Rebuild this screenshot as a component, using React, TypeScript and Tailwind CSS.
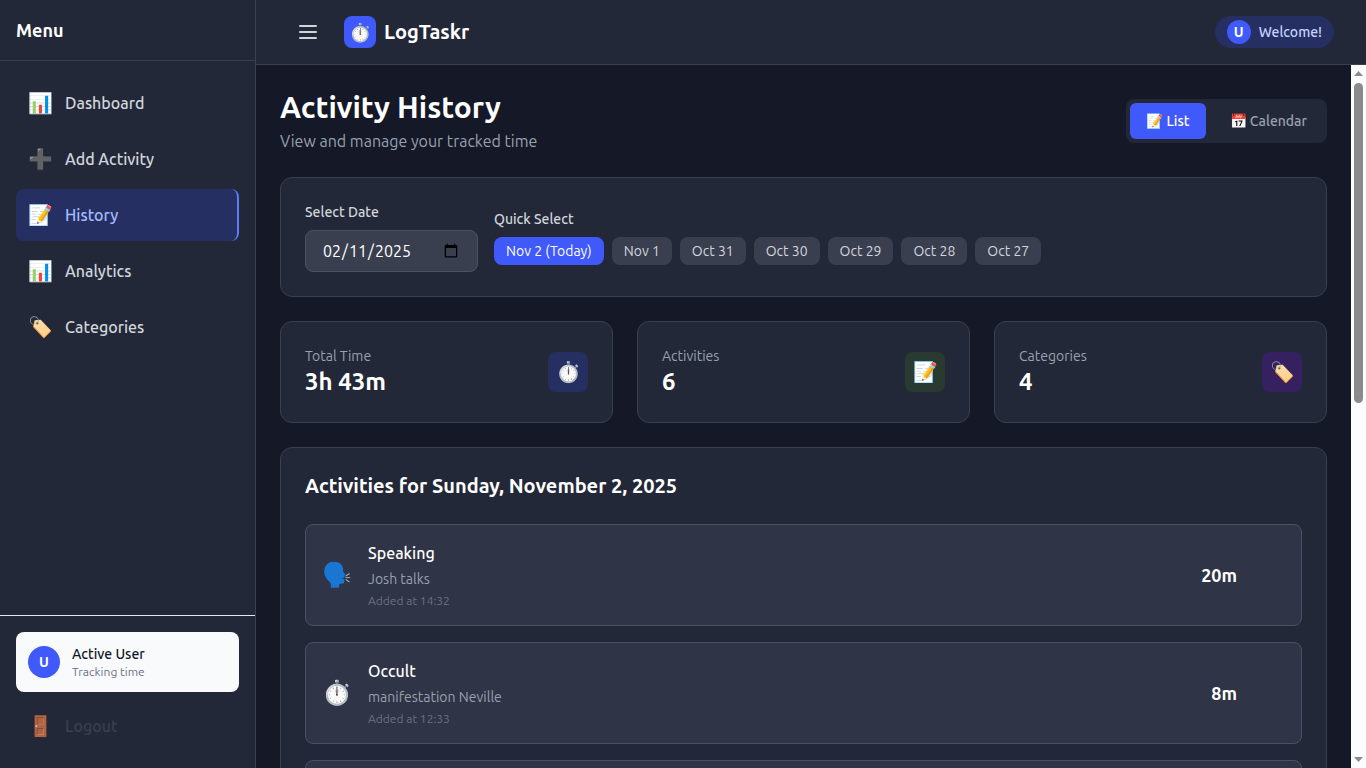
import React, { useState } from "react";

interface INavItem {
  icon: string;
  label: string;
}

interface IStat {
  label: string;
  value: string;
  icon: string;
  iconClass: string;
}

interface IActivity {
  icon: string;
  category: string;
  note: string;
  time: string;
  duration: string;
}

const navItems: INavItem[] = [
  { icon: "📊", label: "Dashboard" },
  { icon: "➕", label: "Add Activity" },
  { icon: "📝", label: "History" },
  { icon: "📊", label: "Analytics" },
  { icon: "🏷️", label: "Categories" }
];

const quickDates = [
  "Nov 2 (Today)",
  "Nov 1",
  "Oct 31",
  "Oct 30",
  "Oct 29",
  "Oct 28",
  "Oct 27"
];

const stats: IStat[] = [
  { label: "Total Time", value: "3h 43m", icon: "⏱️", iconClass: "bg-[#262f62]" },
  { label: "Activities", value: "6", icon: "📝", iconClass: "bg-[#293b31]" },
  { label: "Categories", value: "4", icon: "🏷️", iconClass: "bg-[#37205f]" }
];

const activities: IActivity[] = [
  { icon: "🗣️", category: "Speaking", note: "Josh talks", time: "14:32", duration: "20m" },
  { icon: "⏱️", category: "Occult", note: "manifestation Neville", time: "12:33", duration: "8m" },
  { icon: "💻", category: "Coding", note: "Side project", time: "11:10", duration: "45m" }
];

const Sidebar: React.FC = () => {
  const [active, setActive] = useState("History");

  return (
    <aside className="flex w-64 shrink-0 flex-col border-r border-[#3a3f50] bg-[#232838]">
      <div className="border-b border-[#3a3f50] p-4">
        <h2 className="text-lg font-bold text-white">Menu</h2>
      </div>
      <nav className="flex flex-1 flex-col gap-1 p-4">
        {navItems.map(item => (
          <a
            key={item.label}
            href="#"
            onClick={() => setActive(item.label)}
            className={
              "flex items-center gap-3 rounded-lg p-3 font-medium " +
              (item.label === active
                ? "border-r-2 border-[#5b7cff] bg-[#262f62] text-[#a3bbff]"
                : "text-gray-300")
            }
          >
            <span className="text-xl">{item.icon}</span>
            <span>{item.label}</span>
          </a>
        ))}
      </nav>
      <div className="border-t border-gray-200 p-4">
        <div className="flex items-center gap-3 rounded-lg bg-gray-50 p-3">
          <div className="flex h-8 w-8 items-center justify-center rounded-full bg-[#4059fb] text-sm font-bold text-white">
            U
          </div>
          <div>
            <p className="text-sm font-medium text-gray-900">Active User</p>
            <p className="text-xs text-gray-500">Tracking time</p>
          </div>
        </div>
        <button
          type="button"
          className="mt-2 flex w-full items-center gap-3 rounded-lg p-3 font-medium text-[#3a3f50]"
        >
          <span className="text-xl">🚪</span>
          <span>Logout</span>
        </button>
      </div>
    </aside>
  );
};

const TopBar: React.FC = () => (
  <header className="flex shrink-0 items-center justify-between border-b border-[#3a3f50] bg-[#232838] px-8">
    <div className="flex h-16 items-center gap-4">
      <button type="button" aria-label="Toggle menu" className="p-2 text-gray-300">
        <svg className="h-6 w-6" fill="none" stroke="currentColor" viewBox="0 0 24 24">
          <path strokeLinecap="round" strokeWidth={2} d="M4 6h16M4 12h16M4 18h16" />
        </svg>
      </button>
      <div className="flex items-center gap-2">
        <div className="flex h-8 w-8 items-center justify-center rounded-lg bg-[#4059fb] text-lg">
          ⏱️
        </div>
        <h1 className="text-xl font-bold text-white">LogTaskr</h1>
      </div>
    </div>
    <div className="flex items-center gap-2 rounded-full bg-[#262f62] px-3 py-1">
      <div className="flex h-6 w-6 items-center justify-center rounded-full bg-[#4059fb] text-sm font-bold text-white">
        U
      </div>
      <span className="text-sm font-medium text-[#c5d4ff]">Welcome!</span>
    </div>
  </header>
);

const ViewToggle: React.FC = () => {
  const [view, setView] = useState("List");
  const views = [
    { icon: "📝", name: "List" },
    { icon: "📅", name: "Calendar" }
  ];

  return (
    <div className="flex gap-2 rounded-lg bg-[#232838] p-1">
      {views.map(({ icon, name }) => (
        <button
          key={name}
          type="button"
          onClick={() => setView(name)}
          className={
            "rounded-md px-4 py-2 text-sm font-medium " +
            (view === name ? "bg-[#4059fb] text-white" : "text-gray-400")
          }
        >
          {icon} {name}
        </button>
      ))}
    </div>
  );
};

const DateFilter: React.FC = () => {
  const [selected, setSelected] = useState(quickDates[0]);
  const [date, setDate] = useState("2025-02-11");

  return (
    <section className="flex flex-wrap items-center gap-4 rounded-xl border border-[#3a3f50] bg-[#232838] p-6">
      <div>
        <label htmlFor="date" className="mb-2 block text-sm font-medium text-gray-300">
          Select Date
        </label>
        <input
          id="date"
          type="date"
          value={date}
          onChange={e => setDate(e.target.value)}
          className="block rounded-lg border border-[#4b5063] bg-[#3a3f50] px-4 py-2 text-white"
        />
      </div>
      <div>
        <p className="mb-2 text-sm font-medium text-gray-300">Quick Select</p>
        <div className="flex flex-wrap gap-2">
          {quickDates.map(day => (
            <button
              key={day}
              type="button"
              onClick={() => setSelected(day)}
              className={
                "rounded-lg px-3 py-1 text-sm " +
                (day === selected ? "bg-[#4059fb] text-white" : "bg-[#3a3f50] text-gray-300")
              }
            >
              {day}
            </button>
          ))}
        </div>
      </div>
    </section>
  );
};

const StatCard: React.FC<IStat> = ({ label, value, icon, iconClass }) => (
  <div className="flex items-center justify-between rounded-xl border border-[#3a3f50] bg-[#232838] p-6">
    <div>
      <p className="text-sm text-gray-400">{label}</p>
      <p className="text-2xl font-bold text-white">{value}</p>
    </div>
    <div
      className={"flex h-10 w-10 items-center justify-center rounded-lg text-xl " + iconClass}
    >
      {icon}
    </div>
  </div>
);

const ActivityRow: React.FC<IActivity> = ({ icon, category, note, time, duration }) => (
  <li className="flex items-center gap-4 rounded-lg border border-[#4b5063] bg-[#2f3446] p-4">
    <span className="text-2xl">{icon}</span>
    <div className="flex-1">
      <h3 className="font-medium text-white">{category}</h3>
      <p className="mt-1 text-sm text-gray-400">{note}</p>
      <p className="mt-1 text-xs text-gray-500">Added at {time}</p>
    </div>
    <span className="pr-12 text-lg font-bold text-white">{duration}</span>
  </li>
);

const ScrollTrack: React.FC = () => (
  <div
    aria-hidden="true"
    className="flex w-[15px] shrink-0 flex-col items-center justify-between bg-[#fcfcfc] py-1.5"
  >
    <div className="flex h-1/2 flex-col items-center gap-[7px]">
      <svg className="h-[5px] w-[9px]" viewBox="0 0 9 5" fill="#8b8b8b">
        <path d="M0 5 4.500 0 9 5z" />
      </svg>
      <div className="h-80 w-[9px] rounded-full bg-[#8b8b8b]" />
    </div>
    <svg className="h-[5px] w-[9px]" viewBox="0 0 9 5" fill="#8b8b8b">
      <path d="M0 0h9L4.500 5z" />
    </svg>
  </div>
);

const App: React.FC = () => (
  <div className="flex h-screen overflow-hidden bg-[#141827] font-['Ubuntu','Noto_Sans',sans-serif]">
    <Sidebar />
    <div className="flex min-w-0 flex-1 flex-col">
      <TopBar />
      <div className="flex min-h-0 flex-1">
        <main className="flex-1 space-y-6 overflow-y-auto p-6 [scrollbar-width:none]">
          <div className="flex items-center justify-between">
            <div>
              <h1 className="text-3xl font-bold text-white">Activity History</h1>
              <p className="mt-1 text-gray-400">View and manage your tracked time</p>
            </div>
            <ViewToggle />
          </div>
          <DateFilter />
          <div className="grid grid-cols-3 gap-6">
            {stats.map(stat => (
              <StatCard key={stat.label} {...stat} />
            ))}
          </div>
          <section className="rounded-xl border border-[#3a3f50] bg-[#232838] p-6">
            <h2 className="mb-6 text-xl font-semibold text-white">
              Activities for Sunday, November 2, 2025
            </h2>
            <ul className="space-y-4">
              {activities.map(activity => (
                <ActivityRow key={activity.category} {...activity} />
              ))}
            </ul>
          </section>
        </main>
        <ScrollTrack />
      </div>
    </div>
  </div>
);

export default App;
